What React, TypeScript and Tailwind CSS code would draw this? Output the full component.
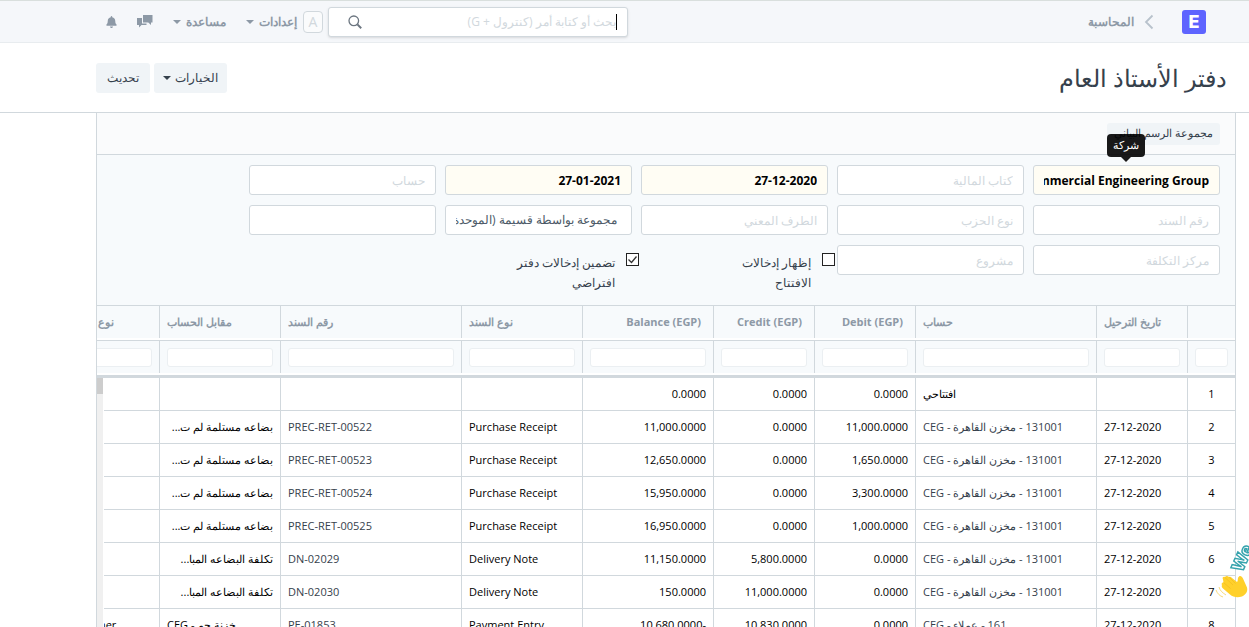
import type { ReactNode } from 'react'
import { FaBell } from 'react-icons/fa'

type Align = 'left' | 'right' | 'center'

interface Column {
  key: string
  label: string
  width: number
  align: Align
}

const columns: Column[] = [
  { key: 'idx', label: '', width: 48, align: 'center' },
  { key: 'date', label: 'تاريخ الترحيل', width: 91, align: 'left' },
  { key: 'account', label: 'حساب', width: 181, align: 'left' },
  { key: 'debit', label: 'Debit (EGP)', width: 101, align: 'right' },
  { key: 'credit', label: 'Credit (EGP)', width: 101, align: 'right' },
  { key: 'balance', label: 'Balance (EGP)', width: 131, align: 'right' },
  { key: 'voucherType', label: 'نوع السند', width: 121, align: 'left' },
  { key: 'voucherNo', label: 'رقم السند', width: 181, align: 'left' },
  { key: 'against', label: 'مقابل الحساب', width: 121, align: 'left' },
  { key: 'partyType', label: 'نوع الحزب', width: 101, align: 'left' },
]

const store = '131001 - مخزن القاهرة - CEG'
const received = 'بضاعه مستلمة لم ت...'
const cost = 'تكلفة البضاعه المبا...'

const rows: string[][] = [
  ['1', '', 'افتتاحي', '0.0000', '0.0000', '0.0000', '', '', '', ''],
  ['2', '27-12-2020', store, '11,000.0000', '0.0000', '11,000.0000', 'Purchase Receipt', 'PREC-RET-00522', received, ''],
  ['3', '27-12-2020', store, '1,650.0000', '0.0000', '12,650.0000', 'Purchase Receipt', 'PREC-RET-00523', received, ''],
  ['4', '27-12-2020', store, '3,300.0000', '0.0000', '15,950.0000', 'Purchase Receipt', 'PREC-RET-00524', received, ''],
  ['5', '27-12-2020', store, '1,000.0000', '0.0000', '16,950.0000', 'Purchase Receipt', 'PREC-RET-00525', received, ''],
  ['6', '27-12-2020', store, '0.0000', '5,800.0000', '11,150.0000', 'Delivery Note', 'DN-02029', cost, ''],
  ['7', '27-12-2020', store, '0.0000', '11,000.0000', '150.0000', 'Delivery Note', 'DN-02030', cost, ''],
  ['8', '27-12-2020', '161 - عملاء - CEG', '0.0000', '10,830.0000', '-10,680.0000', 'Payment Entry', 'PE-01853', 'خزنة جم - CEG', 'Customer'],
]

const alignClass: Record<Align, string> = {
  left: 'text-left',
  right: 'text-right',
  center: 'text-center',
}

const fieldClass =
  'block h-[30px] w-[187px] rounded-[3px] border border-[#d1d8dd] px-[10px] text-xs outline-none placeholder:text-[#d1d8dd]'

function Caret() {
  return <span className="inline-block border-x-4 border-t-4 border-x-transparent border-t-current" />
}

function Field({ label, value }: { label: string; value?: string }) {
  return (
    <input
      aria-label={label}
      placeholder={value ? undefined : label}
      defaultValue={value}
      className={`${fieldClass} ${value ? 'bg-[#fffdf4] font-bold text-black' : 'bg-white'}`}
    />
  )
}

function CheckField({ label, checked }: { label: string; checked?: boolean }) {
  return (
    <label className="flex w-[187px] items-start pt-2 text-xs leading-5 text-[#36414c]">
      <span className="relative -mr-[7px] block h-[13px] w-[13px] shrink-0">
        <input
          type="checkbox"
          defaultChecked={checked}
          className="peer block h-[13px] w-[13px] appearance-none border border-[#222] bg-white"
        />
        <svg viewBox="0 0 13 13" className="pointer-events-none absolute inset-0 hidden peer-checked:block">
          <path d="M2.5 6.5l3 3 5-6" fill="none" stroke="#333" strokeWidth="1.3" />
        </svg>
      </span>
      <span className="mr-[11px] w-[104px]">{label}</span>
    </label>
  )
}

function NavMenu({ children }: { children: ReactNode }) {
  return (
    <button type="button" className="flex items-center gap-[5px] text-xs font-bold text-[#8d99a6]">
      {children}
      <Caret />
    </button>
  )
}

function Navbar() {
  return (
    <nav className="flex h-[43px] shrink-0 items-center border-t border-b border-t-[#d9dfdd] border-b-[#e8ecef] bg-[#f5f7fa] pr-[43px] pl-[106px] text-[#8d99a6]">
      <a href="#home" className="flex h-6 w-6 items-center justify-center rounded-[3px] bg-[#5e64ff] font-[Inter] text-lg font-extrabold text-white">
        E
      </a>
      <svg viewBox="0 0 10 16" className="mr-7 h-4 w-[10px]">
        <path d="M8.5 1.5L2 8l6.5 6.5" fill="none" stroke="#b8c2cc" strokeWidth="1.8" />
      </svg>
      <a href="#accounts" className="mr-[10px] text-xs font-bold">المحاسبة</a>

      <div className="mr-auto flex items-center">
        <div className="relative">
          <input
            aria-label="بحث"
            placeholder="بحث أو كتابة أمر (كنترول + G)"
            className="block h-[30px] w-[300px] rounded-[3px] border border-[#d1d8dd] bg-white pr-[11px] pl-[50px] text-xs shadow-sm outline-none placeholder:text-[#d1d8dd]"
          />
          <span className="absolute top-[7px] right-[11px] h-4 w-px bg-black" />
          <svg viewBox="0 0 14 14" className="absolute top-2 left-5 h-[14px] w-[14px]">
            <circle cx="5.8" cy="5.8" r="4.8" fill="none" stroke="#6c7680" strokeWidth="1.3" />
            <path d="M9.4 9.4l3.8 3.8" stroke="#6c7680" strokeWidth="2" />
          </svg>
        </div>
        <span className="mr-[5px] flex h-[22px] w-5 items-center justify-center rounded-[4px] border border-[#d1d8dd] bg-[#fafbfc] text-sm text-[#d1d8dd]">
          A
        </span>
        <div className="mr-[6px] flex items-center gap-5">
          <NavMenu>إعدادات</NavMenu>
          <NavMenu>مساعدة</NavMenu>
          <button type="button" aria-label="الرسائل">
            <svg viewBox="0 0 16 14" className="h-[14px] w-4" fill="#8d99a6">
              <path d="M6 0h9.500v7.500H14V10L11.300 7.500H6z" />
              <path d="M0 3h5v5.500h4.500V10H4.500L2 12.500V10H0z" />
            </svg>
          </button>
          <button type="button" aria-label="التنبيهات">
            <FaBell className="h-3 w-[11px]" />
          </button>
        </div>
      </div>
    </nav>
  )
}

function PageHead() {
  return (
    <header className="flex h-[70px] shrink-0 items-center justify-between border-b border-[#d1d8dd] bg-white pr-[22px] pl-24">
      <h1 className="text-2xl text-[#36414c]">دفتر الأستاذ العام</h1>
      <div className="flex gap-1 text-xs text-[#36414c]">
        <button type="button" className="flex h-[30px] items-center gap-1 rounded-[3px] bg-[#f0f4f7] px-[9px]">
          الخيارات
          <Caret />
        </button>
        <button type="button" className="h-[30px] rounded-[3px] bg-[#f0f4f7] px-[11px]">تحديث</button>
      </div>
    </header>
  )
}

function Filters() {
  return (
    <form className="flex min-h-[150px] shrink-0 flex-wrap content-start gap-x-[9px] gap-y-[10px] bg-[#f7fafc] pt-[10px] pr-[15px]">
      <div className="relative">
        <Field label="شركة" value="Commercial Engineering Group" />
        <div className="absolute -top-[31px] left-[74px] flex h-[23px] w-[38px] items-center justify-center rounded-[4px] bg-black/90 text-[11px] text-white">
          شركة
          <span className="absolute top-full border-x-[5px] border-t-[5px] border-x-transparent border-t-black/90" />
        </div>
      </div>
      <Field label="كتاب المالية" />
      <Field label="من تاريخ" value="27-12-2020" />
      <Field label="إلى تاريخ" value="27-01-2021" />
      <Field label="حساب" />
      <Field label="رقم السند" />
      <Field label="نوع الحزب" />
      <Field label="الطرف المعني" />
      <select aria-label="مجموعة بواسطة" className={`${fieldClass} appearance-none bg-white pr-[14px] text-[#4c5a67]`}>
        <option>مجموعة بواسطة قسيمة (الموحدة)</option>
      </select>
      <input aria-label="العملة" className={`${fieldClass} bg-white`} />
      <Field label="مركز التكلفة" />
      <Field label="مشروع" />
      <CheckField label="إظهار إدخالات الافتتاح" />
      <CheckField label="تضمين إدخالات دفتر افتراضي" checked />
    </form>
  )
}

function Columns() {
  return (
    <colgroup>
      {columns.map((col) => (
        <col key={col.key} style={{ width: col.width }} />
      ))}
    </colgroup>
  )
}

function Ledger() {
  return (
    <div className="flex min-h-0 flex-1 flex-col border-t border-[#d1d8dd] bg-white text-[11px]">
      <div className="shrink-0 overflow-hidden border-b-[3px] border-[#d1d8dd]">
        <table className="w-[1177px] table-fixed border-separate border-spacing-0">
          <Columns />
          <thead>
            <tr>
              {columns.map((col) => (
                <th key={col.key} scope="col" className="h-[35px] border-b border-[#d1d8dd] p-0 pb-[2px] font-bold text-[#8d99a6]">
                  <div
                    dir={col.align === 'right' ? 'ltr' : 'rtl'}
                    className={`h-8 border-l border-[#d1d8dd] bg-[#f7fafc] leading-8 ${alignClass[col.align]} ${col.align === 'right' ? 'pr-3' : 'px-[7px]'}`}
                  >
                    {col.label}
                  </div>
                </th>
              ))}
            </tr>
            <tr>
              {columns.map((col) => (
                <td key={col.key} className="p-0 pb-[2px]">
                  <div className="h-8 border-l border-[#d1d8dd] bg-[#f7fafc] px-[7px] pt-[7px]">
                    <input
                      aria-label={`تصفية ${col.label}`}
                      className="block h-[19px] w-full rounded-[3px] border border-[#ebeff2] bg-white px-1 outline-none"
                    />
                  </div>
                </td>
              ))}
            </tr>
          </thead>
        </table>
      </div>
      <div className="flex min-h-0 flex-1">
        <div className="min-w-0 flex-1 overflow-hidden">
          <table className="w-[1177px] table-fixed border-separate border-spacing-0">
            <Columns />
            <tbody>
              {rows.map((row) => (
                <tr key={row[0]}>
                  {row.map((value, i) => {
                    const isLink = (i === 2 || i === 7) && row[1] !== ''
                    return (
                      <td
                        key={columns[i].key}
                        className={`h-[33px] truncate border-b border-l border-[#d1d8dd] px-[7px] py-0 ${i === 8 && value.endsWith('...') ? 'text-right' : alignClass[columns[i].align]} ${isLink ? 'text-[#36414c]' : 'text-black'}`}
                      >
                        {isLink ? <a href="#doc">{value}</a> : value}
                      </td>
                    )
                  })}
                </tr>
              ))}
            </tbody>
          </table>
        </div>
        <div className="w-[7px] shrink-0 border-r border-white bg-[#f0f0f0]">
          <div className="h-4 bg-[#cdcdcd]" />
        </div>
      </div>
    </div>
  )
}

function ChatSticker() {
  return (
    <svg viewBox="0 0 34 60" className="pointer-events-none fixed right-0 bottom-[25px] h-[60px] w-[34px]">
      <text
        x="0"
        y="0"
        direction="ltr"
        transform="translate(27 31) rotate(-66)"
        fontFamily="Inter, sans-serif"
        fontSize="17"
        fontWeight="800"
        fill="#fff"
        stroke="#35a3ad"
        strokeWidth="1.4"
      >
        We
      </text>
      <path
        d="M7 43c-1-1 0-3 1.500-2.500L8 37.500c-1-2 0-3 2-2.500 1-1.500 3-1 4 0 1-.5 2 0 3 1l5 4c1.500-1 0-4 2-5.500 1.500-1 3 0 4 2l4 9c1 4-1 7-5 9-5 1.500-9 .5-12-2l-7-6c-1.500-1.500-1.500-2.500-1-3.500z"
        fill="#ffd02b"
      />
      <path d="M8.500 40.500l7 6M10 35.500l8 7.500M14 35l6.500 6.500" fill="none" stroke="#f0b81c" strokeWidth=".6" />
      <path d="M4 45c1 4 4 6 7 8M1 48c1.500 4 4 6 7 7" fill="none" stroke="#f7da7a" strokeWidth="1" />
    </svg>
  )
}

export default function App() {
  return (
    <div
      dir="rtl"
      lang="ar"
      className="flex h-screen flex-col overflow-hidden bg-white font-['Open_Sans','Noto_Sans',sans-serif]"
    >
      <Navbar />
      <PageHead />
      <main className="mr-[13px] ml-24 flex min-h-0 flex-1 flex-col border-x border-[#d1d8dd]">
        <div className="flex h-[42px] shrink-0 items-center border-b border-[#d1d8dd] bg-[#fafbfc] pr-[15px]">
          <button type="button" className="h-[22px] rounded-[3px] bg-[#f0f4f7] px-[7px] text-[11px] text-[#36414c]">
            مجموعة الرسم البياني
          </button>
        </div>
        <Filters />
        <Ledger />
      </main>
      <ChatSticker />
    </div>
  )
}
